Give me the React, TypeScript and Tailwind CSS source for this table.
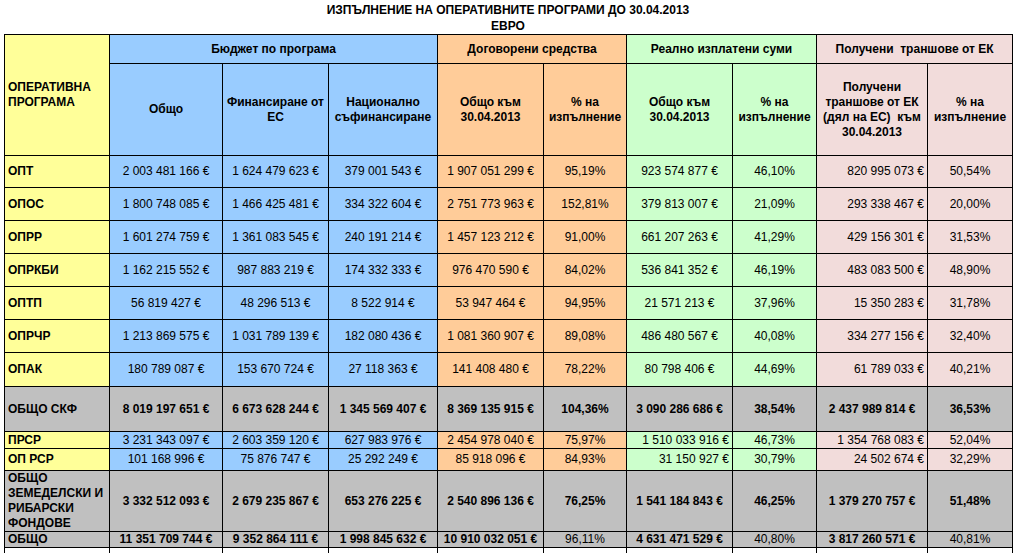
const YELLOW = "bg-[#ffff99]";

type Row = {
  name: string;
  v: string[];
  h: string;
  total?: boolean;
  rightGreen?: boolean;
  boldPct?: boolean;
};

const rows: Row[] = [
  { name: "ОПТ", h: "h-[32px]", v: ["2 003 481 166 €", "1 624 479 623 €", "379 001 543 €", "1 907 051 299 €", "95,19%", "923 574 877 €", "46,10%", "820 995 073 €", "50,54%"] },
  { name: "ОПОС", h: "h-[33px]", v: ["1 800 748 085 €", "1 466 425 481 €", "334 322 604 €", "2 751 773 963 €", "152,81%", "379 813 007 €", "21,09%", "293 338 467 €", "20,00%"] },
  { name: "ОПРР", h: "h-[33px]", v: ["1 601 274 759 €", "1 361 083 545 €", "240 191 214 €", "1 457 123 212 €", "91,00%", "661 207 263 €", "41,29%", "429 156 301 €", "31,53%"] },
  { name: "ОПРКБИ", h: "h-[33px]", v: ["1 162 215 552 €", "987 883 219 €", "174 332 333 €", "976 470 590 €", "84,02%", "536 841 352 €", "46,19%", "483 083 500 €", "48,90%"] },
  { name: "ОПТП", h: "h-[33px]", v: ["56 819 427 €", "48 296 513 €", "8 522 914 €", "53 947 464 €", "94,95%", "21 571 213 €", "37,96%", "15 350 283 €", "31,78%"] },
  { name: "ОПРЧР", h: "h-[33px]", v: ["1 213 869 575 €", "1 031 789 139 €", "182 080 436 €", "1 081 360 907 €", "89,08%", "486 480 567 €", "40,08%", "334 277 156 €", "32,40%"] },
  { name: "ОПАК", h: "h-[34px]", v: ["180 789 087 €", "153 670 724 €", "27 118 363 €", "141 408 480 €", "78,22%", "80 798 406 €", "44,69%", "61 789 033 €", "40,21%"] },
  { name: "ОБЩО СКФ", h: "h-[45px]", total: true, boldPct: true, v: ["8 019 197 651 €", "6 673 628 244 €", "1 345 569 407 €", "8 369 135 915 €", "104,36%", "3 090 286 686 €", "38,54%", "2 437 989 814 €", "36,53%"] },
  { name: "ПРСР", h: "h-[17px]", rightGreen: true, v: ["3 231 343 097 €", "2 603 359 120 €", "627 983 976 €", "2 454 978 040 €", "75,97%", "1 510 033 916 €", "46,73%", "1 354 768 083 €", "52,04%"] },
  { name: "ОП РСР", h: "h-[22px]", rightGreen: true, v: ["101 168 996 €", "75 876 747 €", "25 292 249 €", "85 918 096 €", "84,93%", "31 150 927 €", "30,79%", "24 502 674 €", "32,29%"] },
  { name: "ОБЩО\nЗЕМЕДЕЛСКИ И\nРИБАРСКИ\nФОНДОВЕ", h: "h-[61px]", total: true, boldPct: true, v: ["3 332 512 093 €", "2 679 235 867 €", "653 276 225 €", "2 540 896 136 €", "76,25%", "1 541 184 843 €", "46,25%", "1 379 270 757 €", "51,48%"] },
  { name: "ОБЩО", h: "h-[15px]", total: true, v: ["11 351 709 744 €", "9 352 864 111 €", "1 998 845 632 €", "10 910 032 051 €", "96,11%", "4 631 471 529 €", "40,80%", "3 817 260 571 €", "40,81%"] },
];

// background per data column
const colBg = [
  "bg-[#99ccff]", "bg-[#99ccff]", "bg-[#99ccff]",
  "bg-[#ffcc99]", "bg-[#ffcc99]",
  "bg-[#ccffcc]", "bg-[#ccffcc]",
  "bg-[#f2dcdb]", "bg-[#f2dcdb]",
];

const cell = "border border-black p-0 leading-[15px] align-middle";

function Lines({ text }: { text: string }) {
  const parts = text.split("\n");
  return (
    <>
      {parts.map((p, i) => (
        <span key={i}>
          {p}
          {i < parts.length - 1 && <br />}
        </span>
      ))}
    </>
  );
}

export default function App() {
  return (
    <div className="w-[1015px] h-[553px] overflow-hidden bg-white text-black text-[12px] font-['Liberation_Sans',Arial,sans-serif]">
      {/* title */}
      <div className="w-[1008px] ml-[4px] h-[34px] font-bold text-center leading-[17px] pt-[2px]">
        <div>ИЗПЪЛНЕНИЕ НА ОПЕРАТИВНИТЕ ПРОГРАМИ ДО 30.04.2013</div>
        <div className="leading-[15px]">ЕВРО</div>
      </div>

      <table className="ml-[4px] w-[1008px] table-fixed border-collapse">
        <colgroup>
          <col className="w-[105px]" />
          <col className="w-[113px]" />
          <col className="w-[106px]" />
          <col className="w-[109px]" />
          <col className="w-[106px]" />
          <col className="w-[83px]" />
          <col className="w-[106px]" />
          <col className="w-[84px]" />
          <col className="w-[111px]" />
          <col className="w-[85px]" />
        </colgroup>
        <thead>
          <tr className="h-[29px] font-bold">
            <th rowSpan={2} className={`${cell} ${YELLOW} text-left pl-[3px] font-bold`}>
              ОПЕРАТИВНА<br />ПРОГРАМА
            </th>
            <th colSpan={3} className={`${cell} bg-[#99ccff] font-bold`}>Бюджет по програма</th>
            <th colSpan={2} className={`${cell} bg-[#ffcc99] font-bold`}>Договорени средства</th>
            <th colSpan={2} className={`${cell} bg-[#ccffcc] font-bold`}>Реално изплатени суми</th>
            <th colSpan={2} className={`${cell} bg-[#f2dcdb] font-bold whitespace-pre`}>Получени  траншове от ЕК</th>
          </tr>
          <tr className="h-[92px]">
            <th className={`${cell} bg-[#99ccff] font-bold`}>Общо</th>
            <th className={`${cell} bg-[#99ccff] font-bold`}>Финансиране от<br />ЕС</th>
            <th className={`${cell} bg-[#99ccff] font-bold`}>Национално<br />съфинансиране</th>
            <th className={`${cell} bg-[#ffcc99] font-bold`}>Общо към<br />30.04.2013</th>
            <th className={`${cell} bg-[#ffcc99] font-bold`}>% на<br />изпълнение</th>
            <th className={`${cell} bg-[#ccffcc] font-bold`}>Общо към<br />30.04.2013</th>
            <th className={`${cell} bg-[#ccffcc] font-bold`}>% на<br />изпълнение</th>
            <th className={`${cell} bg-[#f2dcdb] font-bold whitespace-pre`}>Получени<br />траншове от ЕК<br />(дял на ЕС)  към<br />30.04.2013</th>
            <th className={`${cell} bg-[#f2dcdb] font-bold`}>% на<br />изпълнение</th>
          </tr>
        </thead>
        <tbody>
          {rows.map((r) => (
            <tr key={r.name} className={r.h}>
              <td className={`${cell} font-bold text-left pl-[3px] ${r.total ? "bg-[#c0c0c0]" : YELLOW}`}>
                <Lines text={r.name} />
              </td>
              {r.v.map((val, i) => {
                const isPct = i === 4 || i === 6 || i === 8;
                const bold = r.total && (!isPct || r.boldPct);
                let align = "text-center";
                if (!r.total && i === 7) align = "text-right pr-[3px]";
                if (r.rightGreen && i === 5) align = "text-right pr-[3px]";
                return (
                  <td
                    key={i}
                    className={`${cell} whitespace-nowrap ${align} ${bold ? "font-bold" : ""} ${r.total ? "bg-[#c0c0c0]" : colBg[i]}`}
                  >
                    {val}
                  </td>
                );
              })}
            </tr>
          ))}
          <tr className="h-[10px]">
            {Array.from({ length: 10 }).map((_, i) => (
              <td key={i} className="border-x border-black p-0" />
            ))}
          </tr>
        </tbody>
      </table>
    </div>
  );
}
